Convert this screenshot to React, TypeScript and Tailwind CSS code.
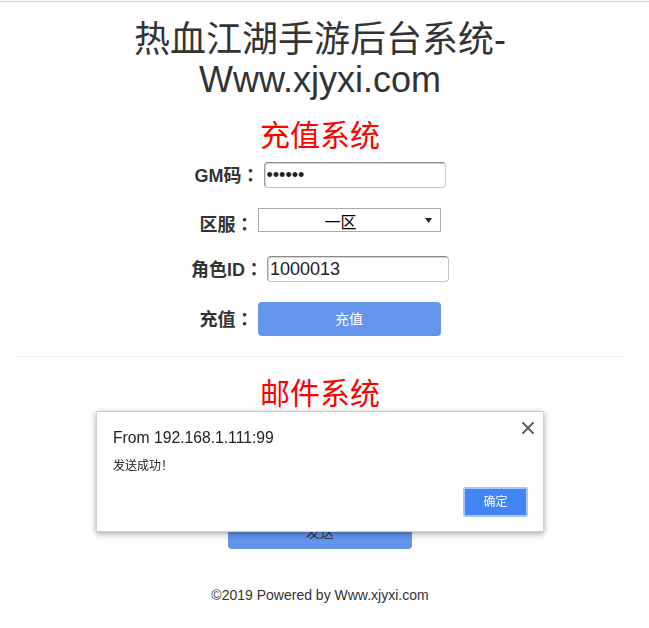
import { X } from "lucide-react";

const Label = ({ text, className = "" }: { text: string; className?: string }) => (
  <label className={`text-[18px] font-bold text-[#333] leading-[26px] ${className}`}>
    {text}
    <span className="font-['Noto_Sans_CJK_JP',sans-serif]">：</span>
  </label>
);

const TextInput = ({ type = "text", value }: { type?: string; value: string }) => (
  <input
    type={type}
    defaultValue={value}
    className="w-[182px] h-[26px] px-[2px] text-[18px] text-[#222] bg-white rounded-[4px] border border-[#c6c6c6] border-t-[#8a8a8a] border-l-[#9a9a9a] shadow-[inset_1px_1px_1px_rgba(0,0,0,0.18)] outline-none"
  />
);

const FakeSelect = ({ value }: { value: string }) => (
  <div className="w-[183px] h-[24px] flex items-center border border-[#a9a9a9] bg-white">
    <span className="flex-1 text-center text-[16px] text-black leading-[16px] pt-[5px]">{value}</span>
    <svg width="7" height="5" viewBox="0 0 7 5" className="ml-[2px] mr-[8px]">
      <path d="M0 0H7L3.5 5Z" fill="#222" />
    </svg>
  </div>
);

export default function App() {
  return (
    <div className="min-h-screen bg-white font-['Liberation_Sans','Noto_Sans_CJK_SC',sans-serif]">
      <div className="h-[2px] border-b border-[#cfcfcf]" />

      <div className="w-[608px] ml-4 text-center">
        <h1 className="mt-[18px] text-[36px] leading-[1.1] font-normal text-[#333]">
          热血江湖手游后台系统-
          <br />
          Www.xjyxi.com
        </h1>

        <h2 className="mt-[20px] mb-[10px] text-[30px] leading-[1.1] text-[#ff0000]">充值系统</h2>

        <div className="flex items-center justify-center gap-[4px] mt-[2px] h-[26px]">
          <Label text="GM码" />
          <TextInput type="password" value="123456" />
        </div>
        <div className="flex items-center justify-center gap-[4px] mt-[20px] h-[24px]">
          <Label text="区服" className="mt-[7px]" />
          <FakeSelect value="一区" />
        </div>
        <div className="flex items-center justify-center gap-[4px] mt-[24px] h-[26px]">
          <Label text="角色ID" />
          <TextInput value="1000013" />
        </div>
        <div className="flex items-center justify-center gap-[4px] mt-[20px] h-[34px]">
          <Label text="充值" />
          <button className="w-[183px] h-[34px] rounded-[4px] bg-[#6495ed] text-white text-[14px]">充值</button>
        </div>

        <hr className="mt-[20px] border-t border-[#eeeeee]" />

        <h2 className="mt-[20px] mb-[10px] text-[30px] leading-[1.1] text-[#ff0000]">邮件系统</h2>

        {/* mail form fields sit under the alert box */}
        <div className="flex items-center justify-center mt-[4px] h-[26px]">
          <TextInput value="" />
        </div>
        <div className="flex items-center justify-center mt-[20px] h-[26px]">
          <TextInput value="" />
        </div>
        <div className="flex justify-center mt-[23px]">
          <button className="w-[184px] h-[34px] rounded-[4px] bg-[#6495ed] text-[#333] text-[14px]">发送</button>
        </div>

        <p className="mt-[36px] text-[14px] leading-[20px] text-[#333]">©2019 Powered by Www.xjyxi.com</p>
      </div>

      <div className="fixed left-[96px] top-[411px] w-[448px] h-[121px] bg-white border border-[#cfcfcf] shadow-[0_2px_6px_rgba(0,0,0,0.35)] pl-[16px] pr-[15px] pt-[16px]">
        <X size={20} strokeWidth={2.6} className="absolute left-[421px] top-[6px] text-[#5f6368]" />
        <div className="text-[15.7px] leading-[20px] text-[#202124]">From 192.168.1.111:99</div>
        <div className="mt-[10px] text-[12px] leading-[16px] text-[#202124]">发送成功！</div>
        <div className="flex justify-end mt-[13px]">
          <button className="w-[65px] h-[30px] rounded-[2px] bg-[#4285f4] border-2 border-[#a9c6fa] text-white text-[12px]">
            确定
          </button>
        </div>
      </div>
    </div>
  );
}
